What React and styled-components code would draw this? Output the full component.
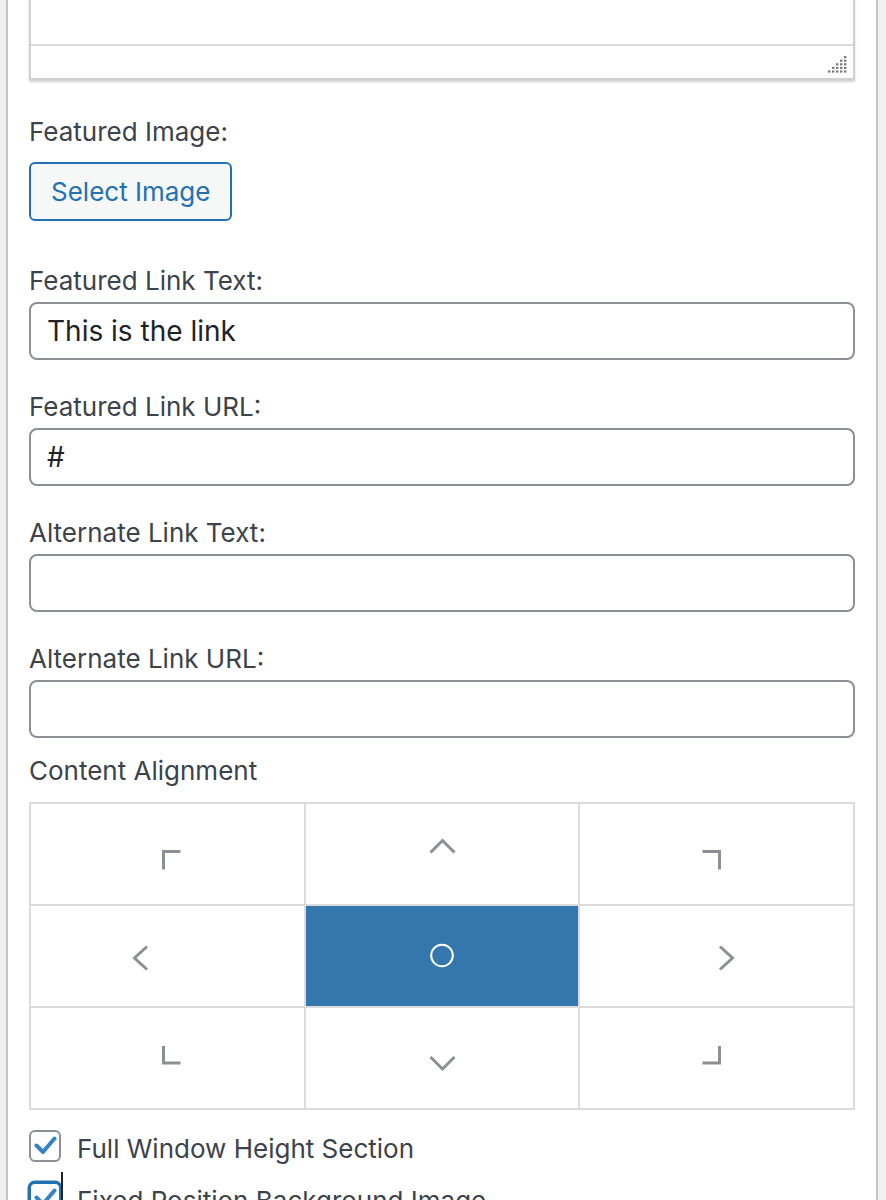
import React from "react";
import styled, { createGlobalStyle } from "styled-components";

const GlobalStyle = createGlobalStyle`
  html, body {
    margin: 0;
    padding: 0;
    background: #f0f0f1;
    overflow: hidden;
  }
  body {
    font-family: Inter, "Noto Sans", "Liberation Sans", sans-serif;
    color: #3c434a;
  }
`;

const fields = [
  { label: "Featured Link Text:", value: "This is the link" },
  { label: "Featured Link URL:", value: "#" },
  { label: "Alternate Link Text:", value: "" },
  { label: "Alternate Link URL:", value: "" },
];

// paths drawn relative to each cell's centre
const cells = [
  { d: "M-3.5 15.5 V-2.5 H13.5" },
  { d: "M-11.5 -1.5 L0.5 -13.5 L12.5 -1.5" },
  { d: "M-14.5 -2.5 H2.5 V15.5" },
  { d: "M-20 -9.5 L-32.5 2 L-20 13.5" },
  { circle: true },
  { d: "M3 -9.5 L15.5 2 L3 13.5" },
  { d: "M-3.5 -12 V5 H13.5" },
  { d: "M-11.5 -1 L0.5 11 L12.5 -1" },
  { d: "M-14.5 5 H2.5 V-12" },
];

const Grip = () => {
  const dots = [];
  for (let r = 0; r < 5; r++) {
    for (let c = 4 - r; c < 5; c++) {
      dots.push(<rect key={r + "-" + c} x={c * 4} y={r * 3.6} width="2.4" height="2.2" fill="#7a7a7a" />);
    }
  }
  return (
    <svg width="20" height="18" viewBox="0 0 20 18">
      {dots}
    </svg>
  );
};

const Check = () => (
  <svg width="24" height="22" viewBox="0 0 24 22">
    <path d="M3.5 10.5 L10 17 L21.5 3.5" fill="none" stroke="#3582c4" strokeWidth="4" strokeLinecap="round" strokeLinejoin="round" />
  </svg>
);

const App = () => {
  return (
    <>
      <GlobalStyle />
      <Page>
        <Panel>
          <Editor>
            <EditorArea />
            <EditorFooter>
              <Grip />
            </EditorFooter>
          </Editor>

          <Label $top={34}>Featured Image:</Label>
          <SelectButton>Select Image</SelectButton>

          {fields.map((f, i) => (
            <React.Fragment key={f.label}>
              <Label $top={i === 0 ? 42 : 29}>{f.label}</Label>
              <TextInput type="text" defaultValue={f.value} />
            </React.Fragment>
          ))}

          <Label $top={15}>Content Alignment</Label>
          <AlignGrid>
            {cells.map((c, i) => (
              <AlignCell key={i} $active={!!c.circle}>
                <svg width="80" height="80" viewBox="-40 -40 80 80">
                  {c.circle ? (
                    <circle cx="0" cy="-0.5" r="10.8" fill="none" stroke="#fff" strokeWidth="2" />
                  ) : (
                    <path d={c.d} fill="none" stroke="#8c8f94" strokeWidth="3" />
                  )}
                </svg>
              </AlignCell>
            ))}
          </AlignGrid>

          <CheckRow>
            <Box>
              <Check />
            </Box>
            <CheckText>Full Window Height Section</CheckText>
          </CheckRow>
          <CheckRow>
            <Box $focus>
              <Check />
              <Caret />
            </Box>
            <CheckText>Fixed Position Background Image</CheckText>
          </CheckRow>
        </Panel>
      </Page>
    </>
  );
};

const Page = styled.div`
  padding: 0 8px 0 6px;
  height: 1200px;
  overflow: hidden;
`;

const Panel = styled.div`
  margin-top: -40px;
  background: #fff;
  border-left: 2px solid #c3c4c7;
  border-right: 2px solid #c3c4c7;
  padding: 0 21px 80px;
`;

const Editor = styled.div`
  border: 2px solid #d0d0d2;
  background: #fff;
  box-shadow: 0 2px 2px rgba(0, 0, 0, 0.18);
`;

const EditorArea = styled.div`
  height: 82px;
  border-bottom: 2px solid #dcdcde;
`;

const EditorFooter = styled.div`
  height: 32px;
  display: flex;
  justify-content: flex-end;
  align-items: flex-end;
  padding: 0 5px 4px 0;
  box-sizing: border-box;
`;

const Label = styled.div`
  margin-top: ${(p) => p.$top}px;
  font-size: 26px;
  line-height: 36px;
  color: #3c434a;
`;

const SelectButton = styled.button`
  display: block;
  margin-top: 12px;
  height: 59px;
  padding: 0 20px;
  border: 2px solid #2271b1;
  border-radius: 6px;
  background: #f6f7f7;
  color: #2271b1;
  font-family: inherit;
  font-size: 26px;
`;

const TextInput = styled.input`
  display: block;
  box-sizing: border-box;
  width: 100%;
  height: 58px;
  margin-top: 3px;
  padding: 0 16px;
  border: 2px solid #8c8f94;
  border-radius: 8px;
  font-family: inherit;
  font-size: 28px;
  color: #1d2327;
  background: #fff;
  outline: none;
`;

const AlignGrid = styled.div`
  margin-top: 13px;
  display: grid;
  grid-template-columns: repeat(3, 1fr);
  grid-template-rows: repeat(3, 100px);
  gap: 2px;
  padding: 2px;
  background: #dcdcde;
`;

const AlignCell = styled.div`
  background: ${(p) => (p.$active ? "#3477ad" : "#fff")};
  display: flex;
  align-items: center;
  justify-content: center;
  overflow: hidden;
`;

const CheckRow = styled.label`
  margin-top: 20px;
  display: flex;
  align-items: center;
  gap: 16px;
  height: 32px;
`;

const Box = styled.span`
  position: relative;
  box-sizing: border-box;
  width: 32px;
  height: 32px;
  flex: none;
  border: 2px solid ${(p) => (p.$focus ? "#2271b1" : "#8c8f94")};
  box-shadow: ${(p) => (p.$focus ? "0 0 0 1.5px #2271b1" : "none")};
  border-radius: 6px;
  display: flex;
  align-items: center;
  justify-content: center;
  background: #fff;
`;

const Caret = styled.span`
  position: absolute;
  left: 30px;
  top: -12px;
  width: 1.5px;
  height: 40px;
  background: #1d2327;
`;

const CheckText = styled.span`
  font-size: 26px;
  line-height: 32px;
  color: #3c434a;
  padding-top: 6px;
`;

export default App;
